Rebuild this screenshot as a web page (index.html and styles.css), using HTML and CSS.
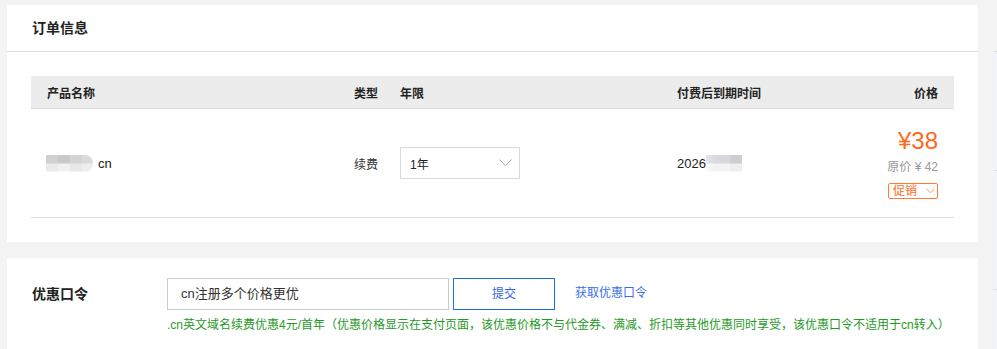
FILE: index.html
```html
<!DOCTYPE html>
<html lang="zh-CN">
<head>
    <meta charset="UTF-8">
    <title>订单信息</title>
    <link rel="stylesheet" href="styles.css">
</head>
<body>
    <div class="page">
        <div class="main">
            <!-- 订单信息 -->
            <div class="card order">
                <div class="card-hd">订单信息</div>
                <div class="table">
                    <div class="tr th">
                        <div>产品名称</div>
                        <div>类型</div>
                        <div>年限</div>
                        <div>付费后到期时间</div>
                        <div class="right">价格</div>
                    </div>
                    <div class="tr td">
                        <div class="domain"><span class="blur blur-name"></span>cn</div>
                        <div>续费</div>
                        <div>
                            <div class="select">
                                <span>1年</span>
                                <svg width="13" height="8" viewBox="0 0 13 8"><path d="M0.5 0.5 L6.5 6.8 L12.5 0.5" fill="none" stroke="#a9a9a9" stroke-width="1"/></svg>
                            </div>
                        </div>
                        <div class="date">2026<span class="blur blur-date"></span></div>
                        <div class="price">
                            <div class="now">¥38</div>
                            <div class="old">原价 ¥ 42</div>
                            <div class="tag">促销
                                <svg width="9" height="6" viewBox="0 0 9 6"><path d="M0.5 0.8 L4.5 4.8 L8.5 0.8" fill="none" stroke="#ff9a5c" stroke-width="1"/></svg>
                            </div>
                        </div>
                    </div>
                </div>
            </div>
            <!-- 优惠口令 -->
            <div class="card coupon">
                <div class="label">优惠口令</div>
                <div class="coupon-body">
                    <div class="coupon-row">
                        <div class="input">cn注册多个价格更优</div>
                        <div class="btn">提交</div>
                        <a class="link" href="javascript:;">获取优惠口令</a>
                    </div>
                    <div class="tip">.cn英文域名续费优惠4元/首年（优惠价格显示在支付页面，该优惠价格不与代金券、满减、折扣等其他优惠同时享受，该优惠口令不适用于cn转入）</div>
                </div>
            </div>
        </div>
        <div class="side">
            <div></div>
            <div></div>
            <div></div>
        </div>
    </div>
</body>
</html>
```

FILE: styles.css
```css
*{
    padding: 0;
    margin: 0;
    box-sizing: border-box;
}
body{
    background: #f3f3f3;
    font-family: "Liberation Sans", "Noto Sans CJK SC", sans-serif;
    font-size: 12px;
    color: #333;
    overflow: hidden;
}
.page{
    display: flex;
    height: 349px;
    padding-top: 5px;
    overflow: hidden;
}
.main{
    width: 971px;
    margin-left: 7px;
    display: flex;
    flex-direction: column;
    gap: 16px;
}
.card{
    background: #fff;
}
.card-hd{
    height: 47px;
    line-height: 46px;
    padding-left: 25px;
    font-size: 14px;
    font-weight: bold;
    color: #222;
    border-bottom: 1px solid #dcdcdc;
}
.table{
    margin: 24px 24px 0;
    padding-bottom: 24px;
}
.tr{
    display: grid;
    grid-template-columns: 307px 46px 277px 1fr auto;
    padding: 0 16px;
    align-items: center;
}
.th{
    height: 33px;
    background: #ececec;
    border-bottom: 1px solid #dcdcdc;
    font-weight: bold;
    color: #222;
}
.right{
    text-align: right;
}
.td{
    height: 109px;
    border-bottom: 1px solid #dcdcdc;
    color: #333;
}
.domain, .date{
    display: flex;
    align-items: center;
    font-size: 13px;
    color: #222;
}
.domain{
    margin-left: -1px;
}
.blur{
    display: inline-block;
    height: 17px;
}
.blur-name{
    width: 47px;
    margin-right: 5px;
    border-radius: 0 8px 8px 0;
    background: linear-gradient(90deg, #d0d0d0 0, #d0d0d0 12px, #c9c9c9 12px, #c9c9c9 24px, #d4d4d4 24px, #d4d4d4 36px, #dadada 36px) top / 100% 50% no-repeat,
                linear-gradient(90deg, #eaeaea 0, #eaeaea 12px, #f1f1f1 12px, #f1f1f1 24px, #e8e8e8 24px, #e8e8e8 36px, #eeeeee 36px) bottom / 100% 50% no-repeat;
}
.blur-date{
    width: 36px;
    background: linear-gradient(90deg, #e6e6ea 0, #d9d9e2 8px, #d6d6de 24px, #cdcdd2 24px) top / 100% 50% no-repeat,
                linear-gradient(90deg, #fbfbfb 0, #f2f2f6 8px, #f4f4f6 24px, #eeeeef 24px) bottom / 100% 50% no-repeat;
}
.select{
    width: 120px;
    height: 32px;
    border: 1px solid #d9d9d9;
    display: flex;
    align-items: center;
    justify-content: space-between;
    padding: 0 7px 0 9px;
    color: #222;
}
.price{
    display: flex;
    flex-direction: column;
    align-items: flex-end;
}
.now{
    font-size: 24px;
    line-height: 28px;
    color: #ff6a1a;
}
.old{
    color: #999;
    line-height: 16px;
    margin-top: 4px;
}
.tag{
    margin-top: 8px;
    width: 50px;
    height: 16px;
    border: 1px solid #ff7a33;
    border-radius: 2px;
    color: #ff6a1a;
    line-height: 14px;
    padding-left: 4px;
    display: flex;
    align-items: center;
    gap: 9px;
}
.coupon{
    flex: 1;
    display: flex;
    padding-top: 20px;
}
.label{
    width: 160px;
    padding-left: 25px;
    font-size: 14px;
    font-weight: bold;
    color: #222;
    line-height: 32px;
}
.coupon-row{
    display: flex;
    align-items: center;
}
.input{
    width: 282px;
    height: 32px;
    border: 1px solid #c9c9d0;
    line-height: 30px;
    padding-left: 13px;
    font-size: 13px;
    color: #333;
}
.btn{
    width: 102px;
    height: 32px;
    margin-left: 4px;
    border: 1px solid #1a6fe8;
    color: #3367e0;
    text-align: center;
    line-height: 30px;
}
.link{
    margin-left: 20px;
    color: #3a6ee8;
    text-decoration: none;
    margin-top: -5px;
}
.tip{
    margin-top: 8px;
    color: #1f9a1f;
    line-height: 14px;
}
.side{
    flex: 1;
    margin: 46px 0 0 16px;
    overflow: hidden;
}
.side div{
    height: 119px;
    border-top: 1px solid #dadde4;
    background: #f1f4fb;
}
```
